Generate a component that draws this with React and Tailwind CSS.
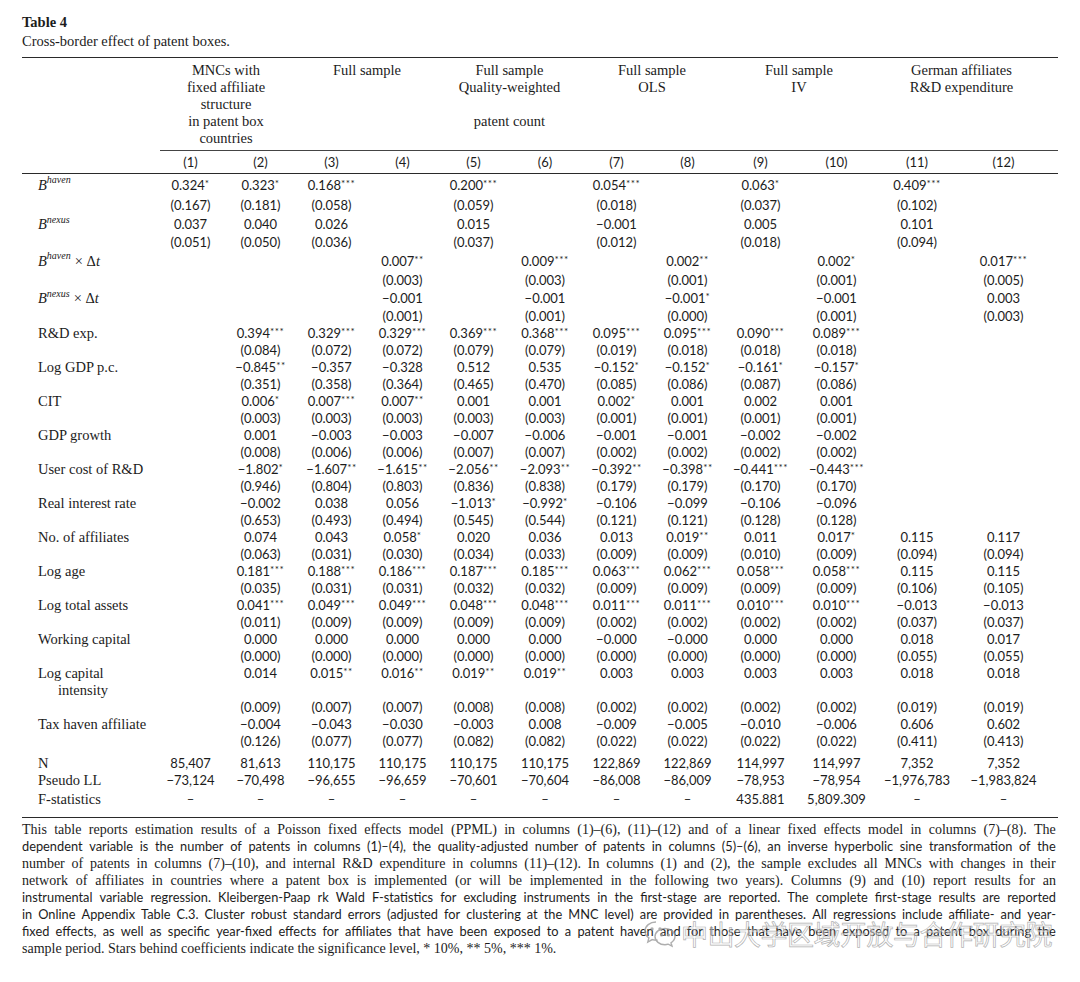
import React from 'react';

const GRID =
  'grid grid-cols-[134px_69px_71px_71px_71px_71px_72px_71px_71px_75px_77px_84px_89px_10px]';
const SERIF = "font-['Liberation_Serif',serif]";
const SANS = "font-['Lato',sans-serif]";

const Num = ({ v }) => {
  if (!v) return <div />;
  const m = v.match(/^(.*?)(\*+)$/);
  return (
    <div className={`${SANS} text-center whitespace-nowrap text-[13px]`}>
      {m ? m[1] : v}
      {m && <sup className="text-[10px] top-[-0.3em] tracking-[0.5px]">{m[2]}</sup>}
    </div>
  );
};

const B = ({ sup, dt }) => (
  <span className={`${SERIF} text-[14.5px]`}>
    <i>B</i>
    <sup className="text-[10px] italic top-[-0.65em]">{sup}</sup>
    {dt && (
      <>
        <span className="ml-[4px]">×</span> Δ<i>t</i>
      </>
    )}
  </span>
);

const Row = ({ label, vals, h = 'h-[17px]', start = false }) => (
  <div className={`${GRID} ${h} ${start ? 'items-start' : 'items-center'} leading-[17px]`}>
    <div className={`${SERIF} text-[14.5px] pl-[16px] whitespace-nowrap`}>{label}</div>
    {vals.map((v, i) => (
      <Num key={i} v={v} />
    ))}
    <div />
  </div>
);

const e = '';
const rows = [
  { label: <B sup="haven" />, h: 'h-[22px]', vals: ['0.324*', '0.323*', '0.168***', e, '0.200***', e, '0.054***', e, '0.063*', e, '0.409***', e] },
  { h: 'h-[19px]', vals: ['(0.167)', '(0.181)', '(0.058)', e, '(0.059)', e, '(0.018)', e, '(0.037)', e, '(0.102)', e] },
  { label: <B sup="nexus" />, h: 'h-[19px]', vals: ['0.037', '0.040', '0.026', e, '0.015', e, '−0.001', e, '0.005', e, '0.101', e] },
  { h: 'h-[17px]', vals: ['(0.051)', '(0.050)', '(0.036)', e, '(0.037)', e, '(0.012)', e, '(0.018)', e, '(0.094)', e] },
  { label: <B sup="haven" dt />, h: 'h-[20px]', vals: [e, e, e, '0.007**', e, '0.009***', e, '0.002**', e, '0.002*', e, '0.017***'] },
  { h: 'h-[19px]', vals: [e, e, e, '(0.003)', e, '(0.003)', e, '(0.001)', e, '(0.001)', e, '(0.005)'] },
  { label: <B sup="nexus" dt />, h: 'h-[17px]', vals: [e, e, e, '−0.001', e, '−0.001', e, '−0.001*', e, '−0.001', e, '0.003'] },
  { h: 'h-[18px]', vals: [e, e, e, '(0.001)', e, '(0.001)', e, '(0.000)', e, '(0.001)', e, '(0.003)'] },
  { label: 'R&D exp.', vals: [e, '0.394***', '0.329***', '0.329***', '0.369***', '0.368***', '0.095***', '0.095***', '0.090***', '0.089***', e, e] },
  { vals: [e, '(0.084)', '(0.072)', '(0.072)', '(0.079)', '(0.079)', '(0.019)', '(0.018)', '(0.018)', '(0.018)', e, e] },
  { label: 'Log GDP p.c.', vals: [e, '−0.845**', '−0.357', '−0.328', '0.512', '0.535', '−0.152*', '−0.152*', '−0.161*', '−0.157*', e, e] },
  { vals: [e, '(0.351)', '(0.358)', '(0.364)', '(0.465)', '(0.470)', '(0.085)', '(0.086)', '(0.087)', '(0.086)', e, e] },
  { label: 'CIT', vals: [e, '0.006*', '0.007***', '0.007**', '0.001', '0.001', '0.002*', '0.001', '0.002', '0.001', e, e] },
  { vals: [e, '(0.003)', '(0.003)', '(0.003)', '(0.003)', '(0.003)', '(0.001)', '(0.001)', '(0.001)', '(0.001)', e, e] },
  { label: 'GDP growth', vals: [e, '0.001', '−0.003', '−0.003', '−0.007', '−0.006', '−0.001', '−0.001', '−0.002', '−0.002', e, e] },
  { vals: [e, '(0.008)', '(0.006)', '(0.006)', '(0.007)', '(0.007)', '(0.002)', '(0.002)', '(0.002)', '(0.002)', e, e] },
  { label: 'User cost of R&D', vals: [e, '−1.802*', '−1.607**', '−1.615**', '−2.056**', '−2.093**', '−0.392**', '−0.398**', '−0.441***', '−0.443***', e, e] },
  { vals: [e, '(0.946)', '(0.804)', '(0.803)', '(0.836)', '(0.838)', '(0.179)', '(0.179)', '(0.170)', '(0.170)', e, e] },
  { label: 'Real interest rate', vals: [e, '−0.002', '0.038', '0.056', '−1.013*', '−0.992*', '−0.106', '−0.099', '−0.106', '−0.096', e, e] },
  { vals: [e, '(0.653)', '(0.493)', '(0.494)', '(0.545)', '(0.544)', '(0.121)', '(0.121)', '(0.128)', '(0.128)', e, e] },
  { label: 'No. of affiliates', vals: [e, '0.074', '0.043', '0.058*', '0.020', '0.036', '0.013', '0.019**', '0.011', '0.017*', '0.115', '0.117'] },
  { vals: [e, '(0.063)', '(0.031)', '(0.030)', '(0.034)', '(0.033)', '(0.009)', '(0.009)', '(0.010)', '(0.009)', '(0.094)', '(0.094)'] },
  { label: 'Log age', vals: [e, '0.181***', '0.188***', '0.186***', '0.187***', '0.185***', '0.063***', '0.062***', '0.058***', '0.058***', '0.115', '0.115'] },
  { vals: [e, '(0.035)', '(0.031)', '(0.031)', '(0.032)', '(0.032)', '(0.009)', '(0.009)', '(0.009)', '(0.009)', '(0.106)', '(0.105)'] },
  { label: 'Log total assets', vals: [e, '0.041***', '0.049***', '0.049***', '0.048***', '0.048***', '0.011***', '0.011***', '0.010***', '0.010***', '−0.013', '−0.013'] },
  { vals: [e, '(0.011)', '(0.009)', '(0.009)', '(0.009)', '(0.009)', '(0.002)', '(0.002)', '(0.002)', '(0.002)', '(0.037)', '(0.037)'] },
  { label: 'Working capital', vals: [e, '0.000', '0.000', '0.000', '0.000', '0.000', '−0.000', '−0.000', '0.000', '0.000', '0.018', '0.017'] },
  { vals: [e, '(0.000)', '(0.000)', '(0.000)', '(0.000)', '(0.000)', '(0.000)', '(0.000)', '(0.000)', '(0.000)', '(0.055)', '(0.055)'] },
  {
    label: (
      <>
        Log capital
        <br />
        <span className="pl-[20px]">intensity</span>
      </>
    ),
    h: 'h-[34px]',
    start: true,
    vals: [e, '0.014', '0.015**', '0.016**', '0.019**', '0.019**', '0.003', '0.003', '0.003', '0.003', '0.018', '0.018'],
  },
  { vals: [e, '(0.009)', '(0.007)', '(0.007)', '(0.008)', '(0.008)', '(0.002)', '(0.002)', '(0.002)', '(0.002)', '(0.019)', '(0.019)'] },
  { label: 'Tax haven affiliate', vals: [e, '−0.004', '−0.043', '−0.030', '−0.003', '0.008', '−0.009', '−0.005', '−0.010', '−0.006', '0.606', '0.602'] },
  { vals: [e, '(0.126)', '(0.077)', '(0.077)', '(0.082)', '(0.082)', '(0.022)', '(0.022)', '(0.022)', '(0.022)', '(0.411)', '(0.413)'] },
];

const stats = [
  { label: 'N', vals: ['85,407', '81,613', '110,175', '110,175', '110,175', '110,175', '122,869', '122,869', '114,997', '114,997', '7,352', '7,352'] },
  { label: 'Pseudo LL', vals: ['−73,124', '−70,498', '−96,655', '−96,659', '−70,601', '−70,604', '−86,008', '−86,009', '−78,953', '−78,954', '−1,976,783', '−1,983,824'] },
  { label: 'F-statistics', h: 'h-[20px]', vals: ['–', '–', '–', '–', '–', '–', '–', '–', '435.881', '5,809.309', '–', '–'] },
];

const notes = [
  { t: 'This table reports estimation results of a Poisson fixed effects model (PPML) in columns (1)–(6), (11)–(12) and of a linear fixed effects model in columns (7)–(8). The', s: false },
  { t: 'dependent variable is the number of patents in columns (1)–(4), the quality-adjusted number of patents in columns (5)–(6), an inverse hyperbolic sine transformation of the', s: true },
  { t: 'number of patents in columns (7)–(10), and internal R&D expenditure in columns (11)–(12). In columns (1) and (2), the sample excludes all MNCs with changes in their', s: false },
  { t: 'network of affiliates in countries where a patent box is implemented (or will be implemented in the following two years). Columns (9) and (10) report results for an', s: false },
  { t: 'instrumental variable regression. Kleibergen-Paap rk Wald F-statistics for excluding instruments in the first-stage are reported. The complete first-stage results are reported', s: true },
  { t: 'in Online Appendix Table C.3. Cluster robust standard errors (adjusted for clustering at the MNC level) are provided in parentheses. All regressions include affiliate- and year-', s: true },
  { t: 'fixed effects, as well as specific year-fixed effects for affiliates that have been exposed to a patent haven and for those that have been exposed to a patent box during the', s: true },
];

const groups = [
  ['MNCs with', 'fixed affiliate', 'structure', 'in patent box', 'countries'],
  ['Full sample'],
  ['Full sample', 'Quality-weighted', '', 'patent count'],
  ['Full sample', 'OLS'],
  ['Full sample', 'IV'],
  ['German affiliates', 'R&D expenditure'],
];

const WeChat = () => (
  <svg width="34" height="30" viewBox="0 0 34 30" fill="none" stroke="#9a9a9a" strokeWidth="1.4">
    <path d="M13 3C6.9 3 2 7 2 12c0 2.8 1.5 5.2 3.9 6.9L4.8 23l4.4-2.4c1.2.3 2.5.5 3.8.5 .5 0 1 0 1.5-.1" />
    <path d="M22 9.5c-5.5 0-10 3.6-10 8.1s4.5 8.1 10 8.1c1.1 0 2.2-.2 3.2-.5l3.8 2-1-3.4c2.4-1.5 4-3.7 4-6.2 0-4.5-4.5-8.1-10-8.1z" />
    <circle cx="9" cy="10" r="1" fill="#9a9a9a" />
    <circle cx="17" cy="10" r="1" fill="#9a9a9a" />
    <circle cx="18.5" cy="16" r="0.9" fill="#9a9a9a" />
    <circle cx="25.5" cy="16" r="0.9" fill="#9a9a9a" />
  </svg>
);

export default function App() {
  return (
    <div className="relative w-[1080px] h-[982px] bg-white text-[#1c1c1c] overflow-hidden">
      <div className="pl-[22px] pt-[13px] w-[1058px]">
        <div className={`${SERIF} text-[14.5px] leading-[19px]`}>
          <div className="font-bold">Table 4</div>
          <div>Cross-border effect of patent boxes.</div>
        </div>

        <div className="mt-[6px] border-t border-[#2a2a2a]" />

        {/* column group headers */}
        <div className={`${GRID} pt-[4px] pb-[3px]`}>
          <div />
          {groups.map((g, i) => (
            <div key={i} className={`col-span-2 ${SERIF} text-[14.5px] leading-[17px] text-center`}>
              {g.map((l, j) => (
                <div key={j} className="h-[17px] whitespace-nowrap">
                  {l}
                </div>
              ))}
            </div>
          ))}
          <div />
        </div>
        <div className={GRID}>
          <div className="col-start-2 col-end-15 ml-[4px] border-t border-[#444]" />
        </div>

        <div className={`${GRID} pt-[3px] pb-[2px] leading-[17px]`}>
          <div />
          {['(1)', '(2)', '(3)', '(4)', '(5)', '(6)', '(7)', '(8)', '(9)', '(10)', '(11)', '(12)'].map((c) => (
            <div key={c} className={`${SANS} text-[13px] text-center`}>
              {c}
            </div>
          ))}
          <div />
        </div>
        <div className="border-t border-[#2a2a2a]" />

        {rows.map((r, i) => (
          <Row key={i} label={r.label} vals={r.vals} h={r.h} start={r.start} />
        ))}

        <div className="pt-[5px] pb-[8px]">
          {stats.map((r, i) => (
            <Row key={i} label={r.label} vals={r.vals} h={r.h} />
          ))}
        </div>

        <div className="border-t border-[#2a2a2a]" />

        <div className="pt-[3px] w-[1034px]">
          {notes.map((n, i) => (
            <div
              key={i}
              className={`flex justify-between h-[17px] leading-[17px] whitespace-nowrap ${
                n.s ? `${SANS} text-[12.8px]` : `${SERIF} text-[14px]`
              }`}
            >
              {n.t.split(' ').map((w, j) => (
                <span key={j}>{w}</span>
              ))}
            </div>
          ))}
          <div className={`${SERIF} text-[14px] leading-[17px]`}>
            sample period. Stars behind coefficients indicate the significance level, * 10%, ** 5%, *** 1%.
          </div>
        </div>
      </div>

      {/* watermark overlay */}
      <div className="absolute left-[643px] top-[919px] flex items-center gap-[4px] opacity-80">
        <WeChat />
        <span className="font-['Noto_Sans_CJK_SC',sans-serif] text-[27px] leading-[30px] text-white/60 [-webkit-text-stroke:0.7px_#a0a0a0] tracking-[-0.5px]">
          中山大学区域开放与合作研究院
        </span>
      </div>
    </div>
  );
}
